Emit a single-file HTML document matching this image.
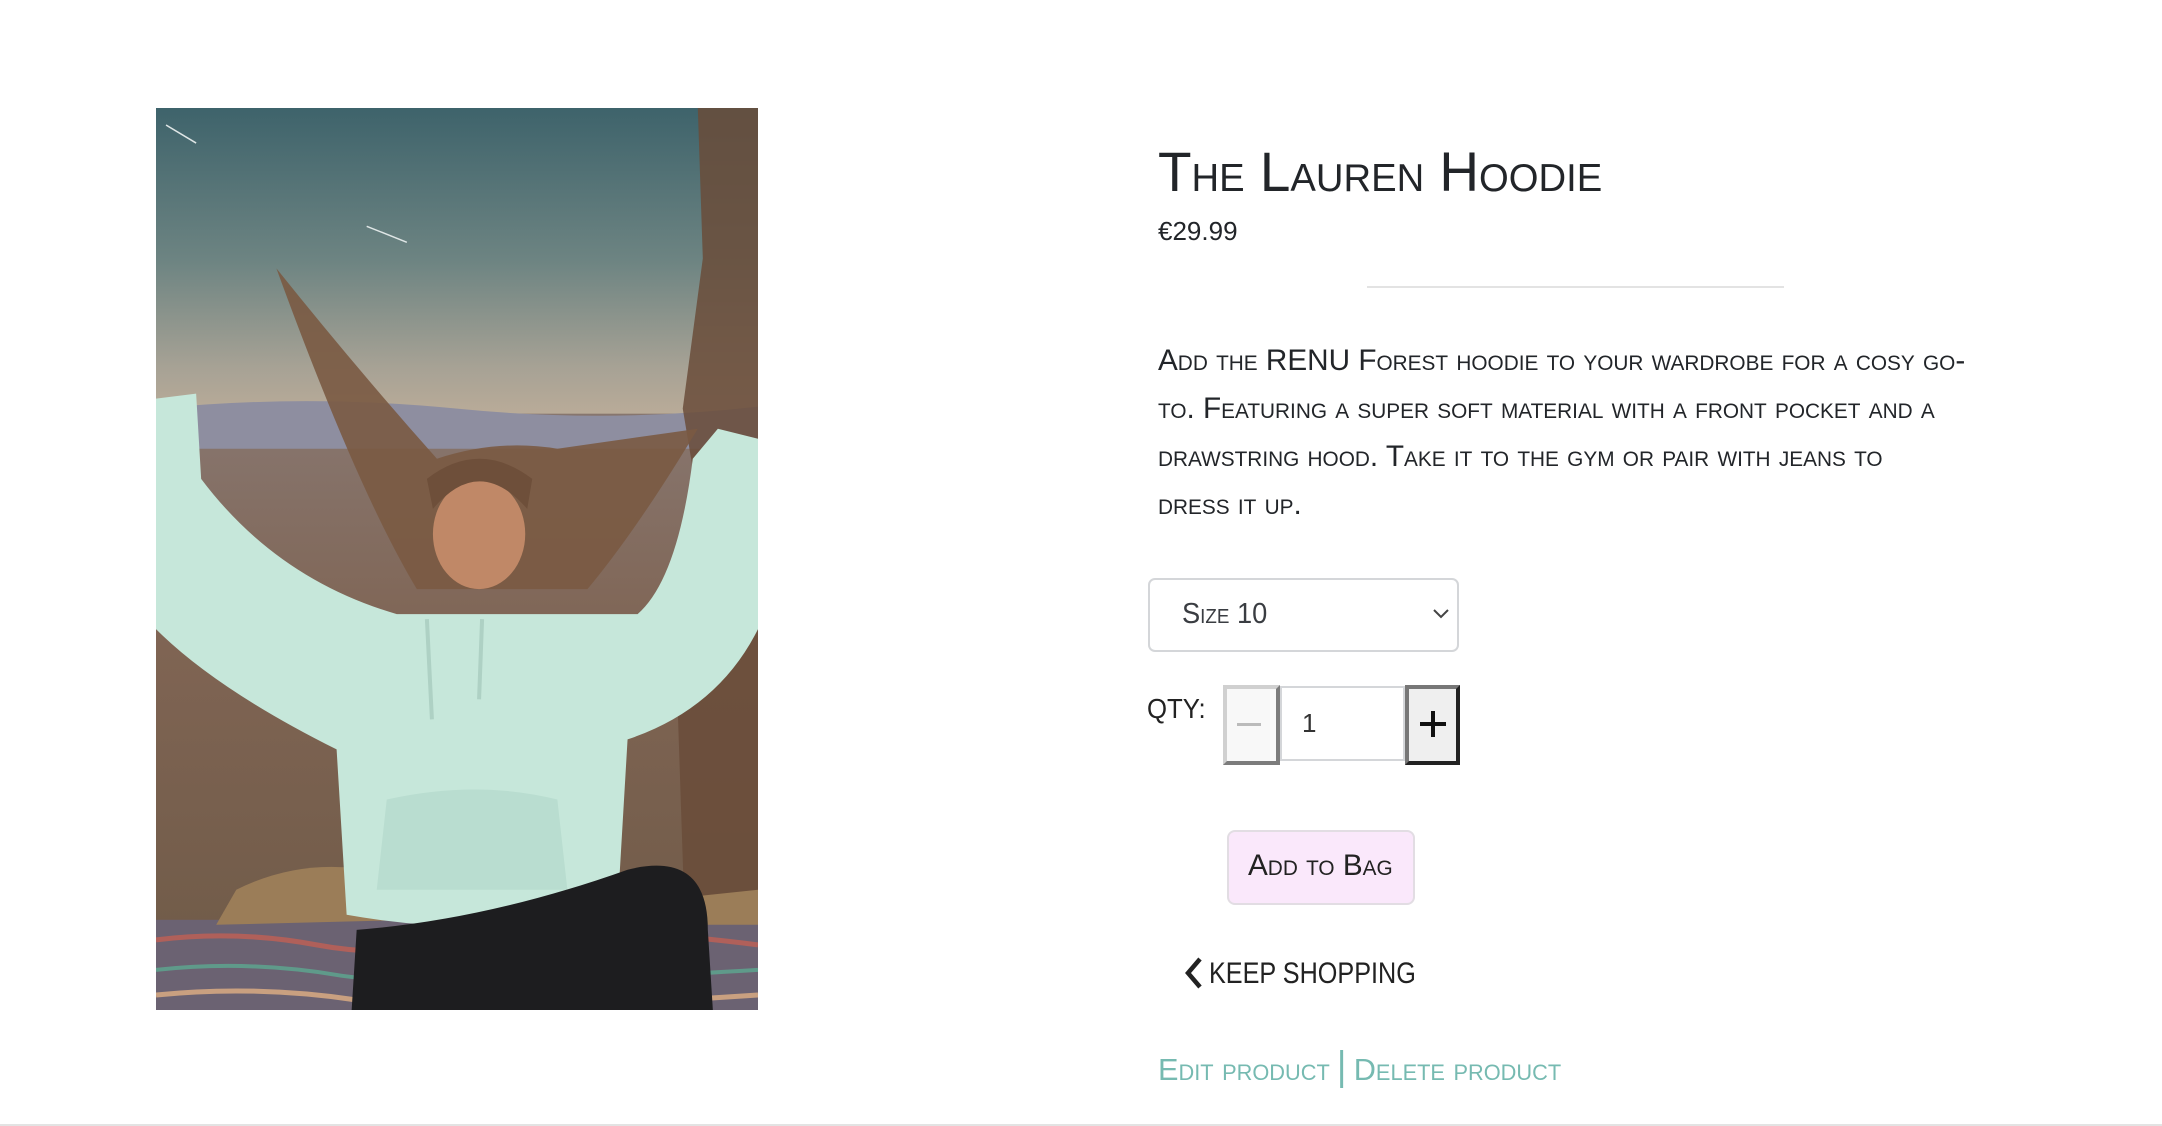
<!DOCTYPE html>
<html><head><meta charset="utf-8"><style>
html,body{margin:0;padding:0;background:#fff;width:2162px;height:1126px;overflow:hidden;position:relative;font-family:"Liberation Sans",sans-serif;color:#222529}
.a{position:absolute;white-space:nowrap}
.sc{font-variant:small-caps}
.sq{display:inline-block;transform-origin:0 50%}
</style></head><body>

<svg class="a" style="left:156px;top:108px" width="602" height="902" viewBox="0 0 600 900" preserveAspectRatio="none">
<defs>
<linearGradient id="sky" x1="0" y1="0" x2="0" y2="1">
<stop offset="0" stop-color="#3e636b"/><stop offset="0.5" stop-color="#6d8482"/><stop offset="0.85" stop-color="#a7a295"/><stop offset="1" stop-color="#b9ab98"/>
</linearGradient>
<linearGradient id="grd" x1="0" y1="0" x2="0" y2="1">
<stop offset="0" stop-color="#8c8a95"/><stop offset="0.25" stop-color="#8a7c78"/><stop offset="0.6" stop-color="#7f6453"/><stop offset="1" stop-color="#6e5a47"/>
</linearGradient>
</defs>
<rect width="600" height="900" fill="url(#grd)"/>
<rect width="600" height="305" fill="url(#sky)"/>
<path d="M0 300 Q150 285 300 300 T600 298 L600 340 L0 340Z" fill="#8e8ea0"/>
<path d="M540 0 L600 0 L600 900 L530 900 L520 600 L545 420 L525 300 L545 150Z" fill="#6a4c3a" opacity="0.85"/>
<rect x="0" y="810" width="600" height="90" fill="#6b6272"/>
<path d="M0 830 Q80 820 160 835 T320 830 T600 835" stroke="#b0605a" stroke-width="5" fill="none"/>
<path d="M0 860 Q90 850 180 865 T600 860" stroke="#5f9a8a" stroke-width="4" fill="none"/>
<path d="M0 885 Q100 875 200 890 T600 885" stroke="#c9a080" stroke-width="5" fill="none"/>
<path d="M80 780 Q160 740 250 770 L260 810 L60 815Z" fill="#9b7d58"/>
<path d="M505 790 L600 780 L600 815 L505 815Z" fill="#9b7d58"/>
<path d="M120 160 Q200 260 280 350 Q340 330 400 340 Q470 330 540 320 Q480 420 430 480 L260 480 Q200 380 120 160Z" fill="#7a5a42" opacity="0.9"/>
<ellipse cx="322" cy="425" rx="46" ry="55" fill="#c08867"/>
<path d="M276 400 Q322 345 370 400 L375 370 Q322 330 270 370Z" fill="#6e4f3a"/>
<path d="M0 290 L40 285 L45 370 Q120 470 240 505 L480 505 Q520 470 535 350 L560 320 L600 330 L600 520 Q560 600 470 630 L460 800 Q330 830 190 805 L180 640 Q60 580 0 520Z" fill="#c6e7da"/>
<path d="M230 690 Q320 670 400 690 L410 780 L220 780Z" fill="#b9ddd0"/>
<path d="M270 510 L275 610 M325 510 L322 590" stroke="#aed1c4" stroke-width="4" fill="none"/>
<path d="M200 820 Q330 810 470 760 Q550 740 550 820 L555 900 L195 900Z" fill="#1d1d1f"/>
<line x1="10" y1="17" x2="40" y2="35" stroke="#dfe6e6" stroke-width="1.5"/>
<line x1="210" y1="118" x2="250" y2="134" stroke="#dfe6e6" stroke-width="1.5"/>
</svg>

<div class="a sc" style="left:1158px;top:140px;font-size:56px;line-height:64px;color:#222529"><span class="sq" style="transform:scaleX(0.98)">The Lauren Hoodie</span></div>
<div class="a" style="left:1158px;top:216px;font-size:26px;line-height:30px"><span class="sq" style="transform:scaleX(1.0)">€29.99</span></div>
<div class="a" style="left:1367px;top:286px;width:417px;height:2px;background:#e3e3e3"></div>

<div class="a sc" style="left:1158px;top:337px;font-size:30px;line-height:48px;color:#222529">
<div><span class="sq" style="transform:scaleX(0.99)">Add the RENU Forest hoodie to your wardrobe for a cosy go-</span></div>
<div><span class="sq" style="transform:scaleX(0.99)">to. Featuring a super soft material with a front pocket and a</span></div>
<div><span class="sq" style="transform:scaleX(0.99)">drawstring hood. Take it to the gym or pair with jeans to</span></div>
<div><span class="sq" style="transform:scaleX(0.99)">dress it up.</span></div>
</div>

<div class="a" style="left:1148px;top:578px;width:311px;height:74px;border:2px solid #d4d6d9;border-radius:7px;box-sizing:border-box"></div>
<div class="a sc" style="left:1182px;top:596px;font-size:29px;line-height:36px;color:#3a3d42"><span class="sq" style="transform:scaleX(0.94)">Size 10</span></div>
<svg class="a" style="left:1432px;top:608px" width="18" height="12" viewBox="0 0 18 12"><path d="M2 2 L9 9 L16 2" stroke="#444" stroke-width="2" fill="none"/></svg>

<div class="a" style="left:1147px;top:692px;font-size:28px;line-height:34px;color:#222"><span class="sq" style="transform:scaleX(0.92)">QTY:</span></div>
<div class="a" style="left:1223px;top:685px;width:57px;height:80px;box-sizing:border-box;background:#f8f8f8;border:4px outset #d0d0d0"></div>
<div class="a" style="left:1237px;top:723px;width:24px;height:3px;background:#bbb"></div>
<div class="a" style="left:1280px;top:686px;width:125px;height:75px;box-sizing:border-box;border:2px solid #d4d6d9;background:#fff"></div>
<div class="a" style="left:1302px;top:708px;font-size:26px;line-height:30px;color:#333">1</div>
<div class="a" style="left:1405px;top:685px;width:55px;height:80px;box-sizing:border-box;background:#efefef;border:4px solid;border-color:#777 #222 #222 #777"></div>
<div class="a" style="left:1420px;top:722px;width:26px;height:4px;background:#111"></div>
<div class="a" style="left:1431px;top:711px;width:4px;height:26px;background:#111"></div>

<div class="a" style="left:1227px;top:830px;width:188px;height:75px;box-sizing:border-box;background:#fae8fb;border:2px solid #e2dde3;border-radius:8px"></div>
<div class="a sc" style="left:1248px;top:848px;font-size:30px;line-height:36px;color:#222"><span class="sq" style="transform:scaleX(0.99)">Add to Bag</span></div>

<svg class="a" style="left:1184px;top:956px" width="20" height="34" viewBox="0 0 20 34"><path d="M16 3 L4 17 L16 31" stroke="#222" stroke-width="4.5" fill="none"/></svg>
<div class="a" style="left:1209px;top:956px;font-size:30px;line-height:36px;color:#222"><span class="sq" style="transform:scaleX(0.84)">KEEP SHOPPING</span></div>

<div class="a sc" style="left:1158px;top:1050px;font-size:31px;line-height:36px;color:#76bab1"><span class="sq" style="transform:scaleX(0.99)">Edit product <span style="display:inline-block;width:3px;height:38px;background:#76bab1;vertical-align:-8px;margin:0 2px"></span> Delete product</span></div>

<div class="a" style="left:0;top:1124px;width:2162px;height:2px;background:#e3e3e3"></div>
</body></html>
